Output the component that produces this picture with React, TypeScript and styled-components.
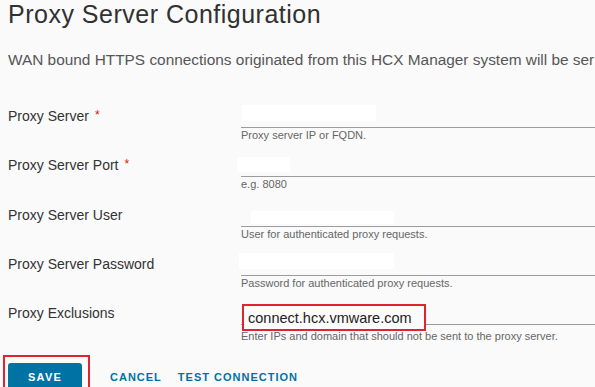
import React from 'react';
import styled, { createGlobalStyle } from 'styled-components';

const GlobalStyle = createGlobalStyle`
  html, body {
    margin: 0;
    padding: 0;
    background: #fafafa;
  }
  body {
    font-family: "Liberation Sans", Arial, sans-serif;
  }
`;

const Page = styled.div`
  width: 595px;
  height: 387px;
  overflow: hidden;
  padding-left: 8px;
  box-sizing: border-box;
  background: #fafafa;
`;

const Title = styled.h1`
  margin: 0;
  font-size: 25px;
  line-height: 28px;
  letter-spacing: 0.5px;
  font-weight: 400;
  color: #313131;
  white-space: nowrap;
`;

const Description = styled.p`
  margin: 22px 0 0;
  font-size: 15.4px;
  line-height: 20px;
  color: #565656;
  white-space: nowrap;
`;

const Form = styled.div`
  margin-top: 34px;
  display: flex;
  flex-direction: column;
  gap: 11.25px;
`;

const Row = styled.div`
  display: grid;
  grid-template-columns: 233px 1fr;
`;

const Label = styled.div`
  height: 24px;
  display: flex;
  align-items: center;
  font-size: 14px;
  color: #333;
  white-space: nowrap;
`;

const Required = styled.span`
  color: #c92100;
  font-size: 12px;
  margin-left: 6px;
  align-self: flex-start;
  margin-top: 4px;
`;

const Field = styled.div`
  display: flex;
  flex-direction: column;
  margin-right: -20px;
`;

const Control = styled.div`
  height: 24px;
  box-sizing: border-box;
  border-bottom: 1px solid #9c9c9c;
  display: flex;
  align-items: flex-start;
`;

const Redaction = styled.div<{ $left: number; $top: number; $width: number; $height: number }>`
  margin-left: ${p => p.$left}px;
  margin-top: ${p => p.$top}px;
  width: ${p => p.$width}px;
  height: ${p => p.$height}px;
  background: #ffffff;
`;

const Highlighted = styled.div`
  position: relative;
  z-index: 1;
  margin-left: 1px;
  margin-top: 3px;
  width: 184px;
  height: 27px;
  flex-shrink: 0;
  box-sizing: border-box;
  border: 2px solid #e0242f;
  background: #fbfbfb;
  padding-left: 4px;
  display: flex;
  align-items: center;
  font-size: 14.5px;
  color: #222;
`;

const Help = styled.div<{ $shift?: number }>`
  margin-top: ${p => p.$shift ?? 0}px;
  font-size: 11px;
  line-height: 14px;
  color: #666;
  white-space: nowrap;
`;

const Actions = styled.div`
  margin-top: 12px;
  margin-left: -5px;
  display: flex;
  align-items: flex-start;
`;

const Callout = styled.div`
  border: 2px solid #e0242f;
  padding: 6px 6px 0 3px;
  height: 40px;
`;

const PrimaryButton = styled.button`
  width: 74px;
  height: 28px;
  border: none;
  border-radius: 3px;
  background: #0072a3;
  color: #fff;
  font-family: inherit;
  font-size: 11px;
  font-weight: 700;
  letter-spacing: 1.2px;
  padding: 0;
`;

const FlatButton = styled.button<{ $gap: number }>`
  margin-left: ${p => p.$gap}px;
  margin-top: 8px;
  height: 28px;
  border: none;
  background: transparent;
  color: #0072a3;
  font-family: inherit;
  font-size: 11px;
  font-weight: 700;
  letter-spacing: 1px;
  padding: 0;
`;

interface FieldDef {
  label: string;
  required?: boolean;
  help: string;
  redaction: { left: number; top: number; width: number; height: number };
}

const fields: FieldDef[] = [
  { label: 'Proxy Server', required: true, help: 'Proxy server IP or FQDN.', redaction: { left: 1, top: 1, width: 134, height: 16 } },
  { label: 'Proxy Server Port', required: true, help: 'e.g. 8080', redaction: { left: -4, top: 4, width: 53, height: 15 } },
  { label: 'Proxy Server User', help: 'User for authenticated proxy requests.', redaction: { left: 10, top: 8, width: 143, height: 13 } },
  { label: 'Proxy Server Password', help: 'Password for authenticated proxy requests.', redaction: { left: -2, top: 1, width: 155, height: 16 } },
];

const App: React.FC = () => {
  return (
    <Page>
      <GlobalStyle />
      <Title>Proxy Server Configuration</Title>
      <Description>
        WAN bound HTTPS connections originated from this HCX Manager system will be ser
      </Description>

      <Form>
        {fields.map(f => (
          <Row key={f.label}>
            <Label>
              {f.label}
              {f.required && <Required>*</Required>}
            </Label>
            <Field>
              <Control>
                <Redaction
                  $left={f.redaction.left}
                  $top={f.redaction.top}
                  $width={f.redaction.width}
                  $height={f.redaction.height}
                />
              </Control>
              <Help>{f.help}</Help>
            </Field>
          </Row>
        ))}
        <Row>
          <Label>Proxy Exclusions</Label>
          <Field>
            <Control>
              <Highlighted>connect.hcx.vmware.com</Highlighted>
            </Control>
            <Help $shift={4}>Enter IPs and domain that should not be sent to the proxy server.</Help>
          </Field>
        </Row>
      </Form>

      <Actions>
        <Callout>
          <PrimaryButton>SAVE</PrimaryButton>
        </Callout>
        <FlatButton $gap={20}>CANCEL</FlatButton>
        <FlatButton $gap={16}>TEST CONNECTION</FlatButton>
      </Actions>
    </Page>
  );
};

export default App;
